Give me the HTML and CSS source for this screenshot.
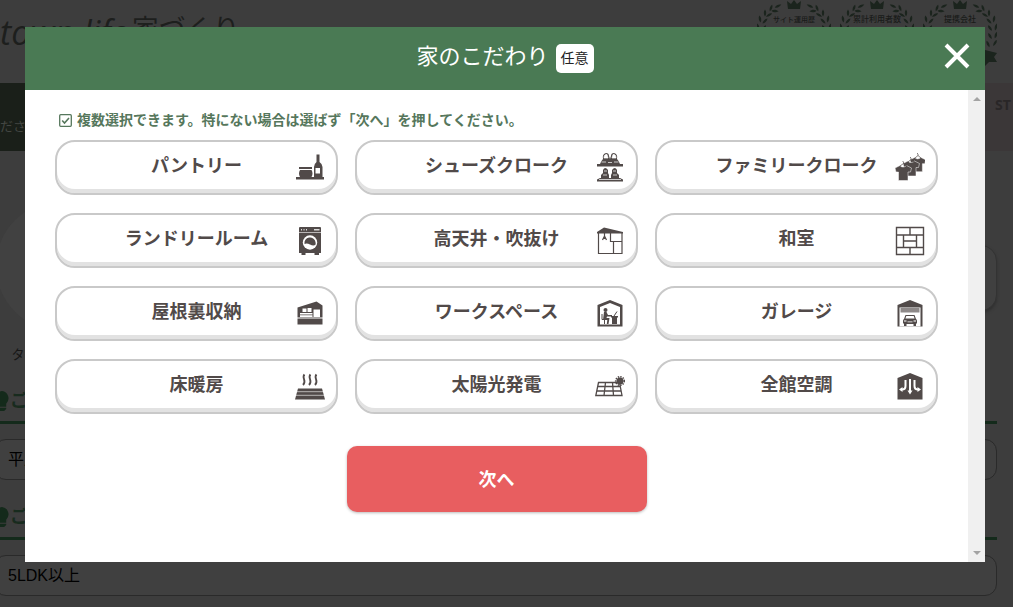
FILE: index.html
```html
<!DOCTYPE html>
<html lang="ja">
<head>
<meta charset="utf-8">
<meta name="viewport" content="width=device-width, initial-scale=1">
<title>家のこだわり</title>
<link rel="stylesheet" href="styles.css">
</head>
<body>
<svg class="defs" aria-hidden="true">
  <defs>
    <path id="leaf" d="M0 -3.500C1.700 -1.500 1.500 1.500 0 3.500C-1.500 1.500 -1.700 -1.500 0 -3.500Z"/>
    <g id="branch">
      <use href="#leaf" transform="translate(16 6) rotate(115)"/>
      <use href="#leaf" transform="translate(19 11) rotate(85)"/>
      <use href="#leaf" transform="translate(23 8) rotate(-20)"/>
      <use href="#leaf" transform="translate(25 15) rotate(-60)"/>
      <use href="#leaf" transform="translate(29 13) rotate(0)"/>
      <use href="#leaf" transform="translate(29 21) rotate(-45)"/>
      <use href="#leaf" transform="translate(34 19) rotate(10)"/>
      <use href="#leaf" transform="translate(30 28) rotate(-35)"/>
      <use href="#leaf" transform="translate(36 27) rotate(15)"/>
      <use href="#leaf" transform="translate(30 36) rotate(-30)"/>
      <use href="#leaf" transform="translate(36 35) rotate(20)"/>
      <use href="#leaf" transform="translate(28 44) rotate(-25)"/>
      <use href="#leaf" transform="translate(35 43) rotate(30)"/>
    </g>
    <g id="laurel">
      <path d="M30 1L34 4L37 0L40 4L44 1L43 9H31Z"/>
      <use href="#branch" transform="translate(37 0)"/>
      <use href="#branch" transform="translate(37 0) scale(-1 1)"/>
      <path d="M0 53L10 50V62L0 65L3 59ZM74 53L62 50V66L66 62L74 62L71 57Z"/>
    </g>
    <path id="shirt" d="M4.500 1C6 3 9 3 11 1L16 3.500L15 7.500H12.500V16H3V7.500H.5L-.5 3.500Z"/>
    <path id="bulb" d="M7 0A7 7 0 0 0 3 12V15H11V12A7 7 0 0 0 7 0ZM3 16H11V17L9 19H5L3 17Z"/>
  </defs>
</svg>

<div class="page">
  <header class="site-header">
    <div class="logo"><span class="logo-latin">town life</span><span class="logo-ja">家づくり</span></div>
    <ul class="awards">
      <li class="award"><svg class="laurel" viewBox="0 0 74 70" aria-hidden="true"><use href="#laurel"/></svg><span class="award-text small">サイト運用歴</span></li>
      <li class="award"><svg class="laurel" viewBox="0 0 74 70" aria-hidden="true"><use href="#laurel"/></svg><span class="award-text">累計利用者数</span></li>
      <li class="award"><svg class="laurel" viewBox="0 0 74 70" aria-hidden="true"><use href="#laurel"/></svg><span class="award-text">提携会社</span></li>
    </ul>
  </header>
  <div class="steps">
    <p class="step-now">ださい</p>
    <p class="step-next">ST</p>
  </div>
  <main class="form">
    <div class="type-row">
      <div class="type-choice"><span class="type-circle"></span><span>タイプ</span></div>
      <div class="type-panel"></div>
    </div>
    <section class="field">
      <h2 class="field-title"><svg class="bulb" viewBox="0 0 14 19" aria-hidden="true"><use href="#bulb"/></svg><label for="floors">ご希望の階数</label></h2>
      <select class="field-select" id="floors"><option>平屋</option></select>
    </section>
    <section class="field">
      <h2 class="field-title"><svg class="bulb" viewBox="0 0 14 19" aria-hidden="true"><use href="#bulb"/></svg><label for="rooms">ご希望の間取り</label></h2>
      <select class="field-select" id="rooms"><option>5LDK以上</option></select>
    </section>
  </main>
</div>

<div class="overlay">
  <section class="modal" role="dialog" aria-modal="true" aria-labelledby="modal-title">
    <header class="modal-header">
      <h1 class="modal-title" id="modal-title">家のこだわり</h1>
      <span class="tag">任意</span>
      <button class="close" type="button" aria-label="閉じる"><svg viewBox="0 0 26 26" aria-hidden="true"><path d="M2 2L24 24M24 2L2 24" stroke="#fff" stroke-width="4"/></svg></button>
    </header>
    <div class="modal-main">
      <form class="modal-body">
        <p class="note"><svg class="note-icon" viewBox="0 0 13 13" fill="none" stroke="currentColor" aria-hidden="true"><rect x=".7" y=".7" width="11.600" height="11.600" rx="1" stroke-width="1.300"/><path d="M3.200 6.500L5.500 9L10 4" stroke-width="1.600"/></svg>複数選択できます。特にない場合は選ばず「次へ」を押してください。</p>
        <div class="options">
          <label class="option"><input class="option-check" type="checkbox"><span>パントリー</span>
            <svg class="icon" viewBox="0 0 30 30"><path d="M1 24H29V26.500H1ZM4 14H17V16H4ZM5 17H16.500Q18.500 20.500 16.500 24H5Q3 20.500 5 17ZM21.500 1.500H24.500V9Q27.500 11 27.500 14V24H19V14Q19 11 21.500 9Z"/><path d="M20.500 15H25V20.500H20.500Z" fill="#fff"/></svg></label>
          <label class="option"><input class="option-check" type="checkbox"><span>シューズクローク</span>
            <svg class="icon" viewBox="0 0 30 30"><path d="M2 11H28V13.500H2ZM5 11Q6 8 8 6Q7 1 11 0Q14 0 14 3L15 6L16 3Q16 0 19 0Q23 1 22 6Q24 8 25 11ZM2 28.500V26.500L5 25H25L28 26.500V28.500ZM6 25V22L8 20V17Q10 13 13 17V20L14 22V25ZM16 25V22L17 20V17Q20 13 22 17V20L24 22V25Z"/><path d="M9 5Q9 1 12 1.500L13 5ZM17 5L18 1.500Q21 1 21 5ZM6.500 9H11M13 9.500H17M19 9H23.500M9 18H12M8 22H12M18 18H21M18 22H22M4 26.500H26" fill="#fff" stroke="#fff" stroke-width=".7"/></svg></label>
          <label class="option"><input class="option-check" type="checkbox"><span>ファミリークローク</span>
            <svg class="icon" viewBox="0 0 30 30"><g stroke="#fff" stroke-width=".5"><use href="#shirt" transform="translate(15.500 3.500) scale(.95)"/><use href="#shirt" transform="translate(8.500 7)"/><use href="#shirt" transform="translate(.5 11.500)"/></g><path d="M5 13L8.500 10.500L12 13M8.500 10.500V9L7.500 8M13 9L16 6.500L19 9M16 6.500V5L15 4M20 5L23 2.500L26 5M23 2.500V1L22 0" fill="none" stroke="currentColor" stroke-width=".7"/></svg></label>

          <label class="option"><input class="option-check" type="checkbox"><span>ランドリールーム</span>
            <svg class="icon" viewBox="0 0 30 30"><path d="M5 1H25Q26 1 26 2V27H24V29H19.500V27H10.500V29H6.500V27H4V2Q4 1 5 1Z"/><path d="M4 6H26V6.700H4ZM6 3H7V4.500H6ZM8.500 3H9.500V4.500H8.500ZM11 3H12V4.500H11ZM19 3H24.500V4.500H19Z" fill="#fff" opacity=".8"/><circle cx="15" cy="16.500" r="7.200" fill="#fff"/><path d="M9.500 18A5.500 5.500 0 0 1 20.500 16Q21 18 20.300 19Q18 20 15 18.500Q12 17 9.500 18Z"/></svg></label>
          <label class="option"><input class="option-check" type="checkbox"><span>高天井・吹抜け</span>
            <svg class="icon" viewBox="0 0 30 30"><path d="M2 7.500V6L9 1.500L28 6V7.500Z"/><path d="M3.500 7V27.500H27V7M15.500 7V15.500H27M18.500 15.500V27.500M9.500 7V10M9.500 10L7.500 14M9.500 10L11.500 14M9.500 10V13" fill="none" stroke="currentColor" stroke-width="1.200"/></svg></label>
          <label class="option"><input class="option-check" type="checkbox"><span>和室</span>
            <svg class="icon" viewBox="0 0 30 30"><path d="M1.500 1.500H28.500V28.500H1.500ZM1.500 9H28.500M1.500 21.500H28.500M15 1.500V9M15 21.500V28.500M8.500 9V21.500M21.500 9V21.500M8.500 15H21.500" fill="none" stroke="currentColor" stroke-width="1.400"/></svg></label>

          <label class="option"><input class="option-check" type="checkbox"><span>屋根裏収納</span>
            <svg class="icon" viewBox="0 0 30 30"><path d="M2.500 8.500L21.500 2.500L27.500 6.500V18.500H2.500ZM2.500 19.500H27.500V25.500H2.500Z"/><path d="M7.500 9.500H11.500V13H7.500ZM12.500 9H16.500V13H12.500ZM18.500 10.500H25V18H18.500ZM5 14H17.500V15.500H5ZM5 16.300H17.500V18H5Z" fill="#fff"/></svg></label>
          <label class="option"><input class="option-check" type="checkbox"><span>ワークスペース</span>
            <svg class="icon" viewBox="0 0 30 30"><path d="M2.500 6L15 1L27.500 6V27.500H2.500ZM5 8V25.500H25V8L15 4Z" fill-rule="evenodd"/><circle cx="10.500" cy="11" r="2"/><path d="M9 13H11.500L13 16H17V17.500H12L11.500 19H14.500L13.500 25H11.800L12.300 21H8ZM16 17H23V18.500H22V25H17V18.500H16Z"/><path d="M7 15V20.500H9.500V25M19 17L22 12.500" fill="none" stroke="currentColor"/></svg></label>
          <label class="option"><input class="option-check" type="checkbox"><span>ガレージ</span>
            <svg class="icon" viewBox="0 0 30 30"><path d="M2.500 6L15 1L27.500 6V27.500H2.500Z"/><path d="M4.500 8.500H25.500V27.500H4.500Z" fill="#fff"/><path d="M5.500 9H24.500V13.500H5.500Z" opacity=".65"/><path d="M10.500 16H19.500L21 20Q22 20.500 22 22V24.500H21V27H18.500V25H11.500V27H9V24.500H8V22Q8 20.500 9 20Z"/><path d="M11.300 17H18.700L19.600 19.500H10.400ZM9 21.500H11.500V22.500H9ZM18.500 21.500H21V22.500H18.500ZM12.500 22.500H17.500V23.200H12.500Z" fill="#fff"/></svg></label>

          <label class="option"><input class="option-check" type="checkbox"><span>床暖房</span>
            <svg class="icon" viewBox="0 0 30 30"><path d="M3 16.500H27L30 27.500H0Z"/><path d="M1 19.700H29M1 23.300H29" stroke="#fff" stroke-width=".6"/><path d="M9.500 2.500C6 6 12.500 8.500 8 13M15.500 2.500C12 6 18.500 8.500 14 13M21.500 2.500C18 6 24.500 8.500 20 13" fill="none" stroke="currentColor" stroke-width="1.800"/></svg></label>
          <label class="option"><input class="option-check" type="checkbox"><span>太陽光発電</span>
            <svg class="icon" viewBox="0 0 30 30"><path d="M3.500 10.500H24.500L27 23.500H.8ZM2.700 14.500H25.300M1.800 19H26.200M10.500 10.500L9 23.500M17.500 10.500L18.500 23.500" fill="none" stroke="currentColor" stroke-width="1.300"/><circle cx="25" cy="9" r="3.500"/><circle cx="25" cy="9" r="4.300" fill="none" stroke="currentColor" stroke-width="1.600" stroke-dasharray="1.400 1.100"/></svg></label>
          <label class="option"><input class="option-check" type="checkbox"><span>全館空調</span>
            <svg class="icon" viewBox="0 0 30 30"><path d="M2.500 6L15 1L27.500 6V27.500H2.500Z"/><path d="M15 7V19M10.500 8V14Q10.500 17.500 7 17.500M19.500 8V14Q19.500 17.500 23 17.500" fill="none" stroke="#fff" stroke-width="2"/><path d="M12.500 18.500H17.500L15 22.500ZM7.500 15V20L4 17.500ZM22.500 15V20L26 17.500Z" fill="#fff"/></svg></label>
        </div>
        <button class="next" type="button">次へ</button>
      </form>
      <div class="scrollbar" aria-hidden="true"><span class="arrow up"></span><span class="arrow down"></span></div>
    </div>
  </section>
</div>
</body>
</html>
```
FILE: styles.css
```css
* { box-sizing: border-box; }

body {
  margin: 0;
  background: #3d3d3d;
  color: #514a49;
  font-family: "Liberation Sans", "Noto Sans CJK JP", sans-serif;
  overflow: hidden;
}

h1, h2, p, ul { margin: 0; padding: 0; }
.defs { position: absolute; width: 0; height: 0; }

.page { height: 100vh; overflow: hidden; }

.site-header {
  display: flex;
  justify-content: space-between;
  height: 83px;
  padding-right: 16px;
}
.logo {
  display: flex;
  align-items: flex-start;
  color: #1d1f1d;
  white-space: nowrap;
}
.logo-latin { font: italic 400 34px/64px "Open Sans", sans-serif; }
.logo-ja { margin-left: 4px; font-size: 27px; line-height: 60px; }
.awards { display: flex; gap: 9px; list-style: none; }
.award { display: grid; width: 74px; height: 70px; }
.laurel, .award-text { grid-area: 1 / 1; }
.laurel { width: 74px; height: 70px; fill: #1b241d; }
.award-text {
  padding-top: 12px;
  color: #191b19;
  font-size: 8px;
  font-weight: 500;
  line-height: 16px;
  text-align: center;
}
.award-text.small { font-size: 7px; }

.steps { display: flex; height: 68px; background: #3b3738; }
.step-now {
  flex: 1;
  background: #1a1f19;
  color: #434642;
  font-size: 13px;
  line-height: 88px;
}
.step-next {
  width: 33px;
  padding-left: 15px;
  color: #292627;
  font: bold 14px/44px "Open Sans", sans-serif;
}

.form { margin: 0 16px 0 -6px; }
.type-row {
  display: flex;
  justify-content: space-between;
  height: 237px;
  padding-top: 50px;
  color: #171717;
  font-size: 13px;
}
.type-choice {
  display: flex;
  flex-direction: column;
  align-items: center;
  gap: 13px;
  width: 134px;
  padding-right: 60px;
}
.type-circle {
  width: 130px;
  height: 130px;
  margin-right: -60px;
  flex: none;
  border-radius: 50%;
  background: #414141;
}
.type-panel {
  width: 120px;
  height: 66px;
  margin-top: 44px;
  border: 1px solid #333;
  border-radius: 16px;
  background: #404040;
  box-shadow: 0 2px 3px #303030;
}
.field { display: flex; flex-direction: column; gap: 15px; height: 116px; }
.field-title {
  display: flex;
  align-items: center;
  gap: 0;
  height: 36px;
  padding-bottom: 8px;
  border-bottom: 3px solid #142a1b;
  color: #182b1e;
  font-size: 18px;
  line-height: 24px;
}
.bulb { width: 16px; height: 20px; fill: #142a1b; }
.field-select {
  appearance: none;
  width: 100%;
  height: 41px;
  padding: 0 13px;
  border: 1px solid #2a2a2a;
  border-radius: 12px;
  background: #404040;
  color: #000;
  font: inherit;
  font-size: 16px;
}

.overlay {
  position: fixed;
  inset: 0;
  display: flex;
  padding: 27px 28px 45px 25px;
}
.modal { display: flex; flex: 1; flex-direction: column; background: #fff; }
.modal-header {
  position: relative;
  display: flex;
  align-items: center;
  justify-content: center;
  gap: 7px;
  height: 63px;
  background: #4a7a54;
}
.modal-title {
  padding-bottom: 4px;
  color: #fff;
  font-size: 22px;
  font-weight: 400;
  line-height: 32px;
}
.tag {
  padding: 0 5px;
  border-radius: 5px;
  background: #fff;
  color: #222;
  font-size: 14px;
  line-height: 29px;
}
.close {
  position: absolute;
  top: 16px;
  right: 15px;
  width: 26px;
  height: 26px;
  padding: 0;
  border: 0;
  background: none;
}
.close svg { display: block; }

.modal-main { display: flex; flex: 1; min-height: 0; }
.modal-body {
  display: flex;
  flex: 1;
  flex-direction: column;
  padding: 20px 30px;
}
.note {
  display: flex;
  align-items: center;
  gap: 5px;
  padding-left: 4px;
  color: #56775c;
  font-size: 14px;
  font-weight: bold;
  line-height: 20px;
}
.note-icon { width: 13px; height: 13px; }
.options {
  display: grid;
  grid-template-columns: repeat(3, 1fr);
  gap: 18px 17px;
  margin-top: 10px;
}
.option {
  position: relative;
  display: flex;
  align-items: center;
  justify-content: center;
  height: 55px;
  padding-bottom: 3px;
  border: 2px solid #c9c9c9;
  border-radius: 20px;
  background: #fff;
  box-shadow: inset 0 -4px #e2e2e2;
  font-size: 18px;
  font-weight: bold;
  line-height: 24px;
}
.option-check {
  position: absolute;
  inset: 0;
  width: 100%;
  height: 100%;
  margin: 0;
  opacity: 0;
}
.icon {
  position: absolute;
  top: 11px;
  right: 11px;
  width: 30px;
  height: 30px;
  fill: currentColor;
}
.next {
  align-self: center;
  width: 300px;
  height: 66px;
  margin-top: 32px;
  padding-bottom: 4px;
  border: 0;
  border-radius: 10px;
  background: #e85e60;
  box-shadow: 0 1px 3px #bbb;
  color: #fff;
  font: inherit;
  font-size: 18px;
  font-weight: bold;
}
.scrollbar {
  display: flex;
  flex-direction: column;
  align-items: center;
  justify-content: space-between;
  width: 17px;
  padding: 7px 0;
  background: #f0f0f0;
}
.arrow { border: 4px solid transparent; }
.arrow.up { border-top: 0; border-bottom-color: #a3a3a3; }
.arrow.down { border-bottom: 0; border-top-color: #a3a3a3; }
```
